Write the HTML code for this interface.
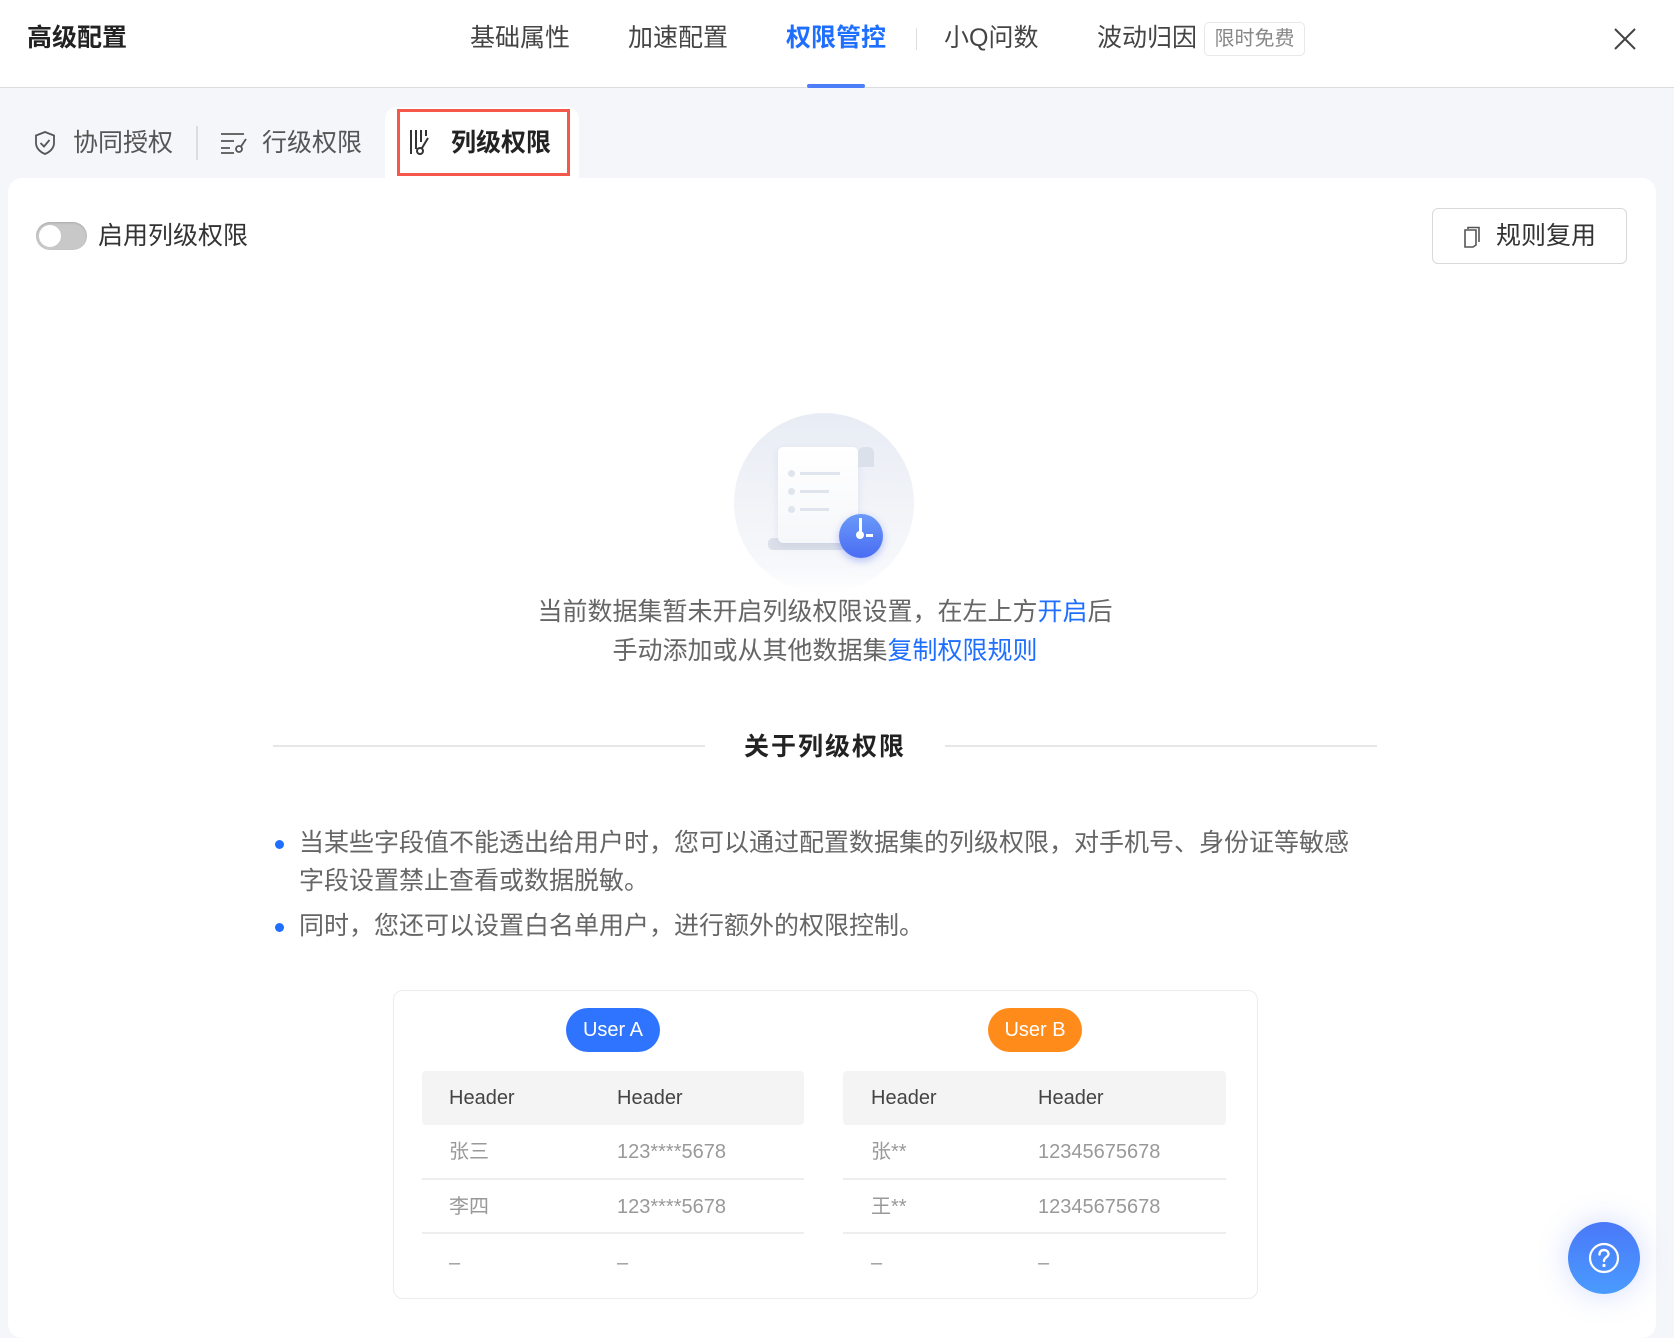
<!DOCTYPE html>
<html><head><meta charset="utf-8"><style>
*{margin:0;padding:0;box-sizing:border-box}
body{width:1674px;height:1314px;overflow:hidden;background:#f5f6fa;font-family:"Liberation Sans","Noto Sans CJK SC",sans-serif;position:relative;color:#333}
.a{position:absolute;white-space:nowrap}
.hdr{position:absolute;left:0;top:0;width:1674px;height:88px;background:#fff;border-bottom:1px solid #dcdde0}
.tab{position:absolute;top:20px;font-size:25px;line-height:36px;color:#444}
.sub{position:absolute;top:125px;font-size:25px;line-height:36px;color:#555}
.card{position:absolute;left:8px;top:178px;width:1648px;height:1160px;background:#fff;border-radius:14px}
.c{font-size:20px;line-height:28px;color:#999}
.h{font-size:20px;line-height:28px;color:#444}
</style></head><body>
<div class="hdr"></div>
<div class="a" style="left:27px;top:20px;font-size:25px;line-height:36px;font-weight:bold;color:#222">高级配置</div>
<div class="tab" style="left:470px">基础属性</div>
<div class="tab" style="left:628px">加速配置</div>
<div class="tab" style="left:786px;color:#1e6fff;font-weight:bold">权限管控</div>
<div class="a" style="left:916px;top:28px;width:1px;height:22px;background:#ddd"></div>
<div class="tab" style="left:944px">小Q问数</div>
<div class="tab" style="left:1097px">波动归因</div>
<div class="a" style="left:1204px;top:22px;width:101px;height:34px;border:1px solid #e8e8e8;border-radius:5px;font-size:20px;line-height:32px;text-align:center;color:#888">限时免费</div>
<svg class="a" style="left:1612px;top:26px" width="26" height="26" viewBox="0 0 26 26"><path d="M3 3L23 23M23 3L3 23" stroke="#444" stroke-width="2"/></svg>
<div class="a" style="left:807px;top:84px;width:58px;height:4px;background:#4d7ef7;border-radius:2px"></div>

<svg class="a" style="left:33px;top:130px" width="24" height="26" viewBox="0 0 24 26"><path d="M12 2L21 5.5V13C21 18 17 22 12 24C7 22 3 18 3 13V5.5Z" fill="none" stroke="#555" stroke-width="1.8"/><path d="M7.5 13L11 16.5L16.5 10" fill="none" stroke="#555" stroke-width="1.8"/></svg>
<div class="sub" style="left:73px">协同授权</div>
<div class="a" style="left:196px;top:126px;width:2px;height:34px;background:#ddd"></div>
<svg class="a" style="left:220px;top:131px" width="28" height="24" viewBox="0 0 28 24"><path d="M1 3H24M1 10H14M1 17H10M1 22H14" stroke="#555" stroke-width="1.8" fill="none"/><circle cx="19" cy="18" r="3" fill="none" stroke="#555" stroke-width="1.8"/><path d="M21 15.5L26 8" stroke="#555" stroke-width="1.8"/></svg>
<div class="sub" style="left:262px">行级权限</div>
<div class="a" style="left:385px;top:107px;width:194px;height:75px;background:#fff;border-radius:12px 12px 0 0"></div>
<div class="a" style="left:397px;top:109px;width:173px;height:67px;border:3px solid #f5574a"></div>
<svg class="a" style="left:409px;top:129px" width="26" height="28" viewBox="0 0 26 28"><path d="M2 1V25M7 1V20M12 1V13M17 1V7" stroke="#333" stroke-width="2" fill="none"/><circle cx="11" cy="22" r="3" fill="none" stroke="#333" stroke-width="2"/><path d="M13 19L19 9" stroke="#333" stroke-width="2"/></svg>
<div class="sub" style="left:451px;color:#222;font-weight:bold">列级权限</div>

<div class="card"></div>
<div class="a" style="left:36px;top:222px;width:51px;height:28px;border-radius:14px;background:#c8c8c8;box-shadow:inset 0 1px 2px rgba(0,0,0,.15)"></div>
<div class="a" style="left:39px;top:225px;width:22px;height:22px;border-radius:11px;background:#fff"></div>
<div class="a" style="left:98px;top:218px;font-size:25px;line-height:36px;color:#333">启用列级权限</div>
<div class="a" style="left:1432px;top:208px;width:195px;height:56px;border:1px solid #d9d9d9;border-radius:6px;background:#fff"></div>
<svg class="a" style="left:1463px;top:225px" width="20" height="24" viewBox="0 0 20 24"><path d="M5 4V2.5H16V17" fill="none" stroke="#555" stroke-width="1.6"/><path d="M2 5H13V20L10 22H2Z" fill="none" stroke="#555" stroke-width="1.6"/></svg>
<div class="a" style="left:1496px;top:218px;font-size:25px;line-height:36px;color:#333">规则复用</div>

<div class="a" style="left:734px;top:413px;width:180px;height:180px;border-radius:90px;background:linear-gradient(#e8ecf4,#f7f8fb 85%,#fff)"></div>
<div class="a" style="left:768px;top:538px;width:100px;height:12px;border-radius:5px;background:#dbe0ea"></div>
<div class="a" style="left:778px;top:447px;width:80px;height:96px;border-radius:5px;background:linear-gradient(#fff,#f6f7fa);box-shadow:0 3px 8px rgba(150,160,190,.2)"></div>
<div class="a" style="left:858px;top:447px;width:16px;height:20px;border-radius:6px 6px 0 0;background:#dbe0ea"></div>
<div class="a" style="left:788px;top:470px;width:7px;height:7px;border-radius:4px;background:#e0e4ec"></div>
<div class="a" style="left:800px;top:472px;width:40px;height:3px;background:#e0e4ec"></div>
<div class="a" style="left:788px;top:488px;width:7px;height:7px;border-radius:4px;background:#e0e4ec"></div>
<div class="a" style="left:800px;top:490px;width:29px;height:3px;background:#e0e4ec"></div>
<div class="a" style="left:788px;top:506px;width:7px;height:7px;border-radius:4px;background:#e0e4ec"></div>
<div class="a" style="left:800px;top:508px;width:29px;height:3px;background:#e0e4ec"></div>
<div class="a" style="left:839px;top:514px;width:44px;height:44px;border-radius:22px;background:linear-gradient(#6a9af8,#4a6cf3);box-shadow:0 3px 8px rgba(80,110,240,.4)"></div>
<div class="a" style="left:859px;top:518px;width:3px;height:14px;background:#fff"></div>
<div class="a" style="left:856px;top:531px;width:8px;height:8px;border-radius:4px;background:#fff"></div>
<div class="a" style="left:866px;top:534px;width:7px;height:3px;background:#fff"></div>

<div class="a" style="left:0;width:1650px;top:593px;text-align:center;font-size:25px;line-height:39px;color:#666">当前数据集暂未开启列级权限设置，在左上方<span style="color:#1e6fff">开启</span>后<br>手动添加或从其他数据集<span style="color:#1e6fff">复制权限规则</span></div>

<div class="a" style="left:273px;top:745px;width:432px;height:2px;background:#e6e6e6"></div>
<div class="a" style="left:945px;top:745px;width:432px;height:2px;background:#e6e6e6"></div>
<div class="a" style="left:705px;width:240px;top:729px;text-align:center;font-size:25px;line-height:36px;font-weight:bold;color:#222;letter-spacing:2px">关于列级权限</div>

<div class="a" style="left:275px;top:840px;width:9px;height:9px;border-radius:5px;background:#1e6fff"></div>
<div class="a" style="left:275px;top:923px;width:9px;height:9px;border-radius:5px;background:#1e6fff"></div>
<div class="a" style="left:299px;top:824px;font-size:25px;line-height:38px;color:#666">当某些字段值不能透出给用户时，您可以通过配置数据集的列级权限，对手机号、身份证等敏感<br>字段设置禁止查看或数据脱敏。</div>
<div class="a" style="left:299px;top:907px;font-size:25px;line-height:38px;color:#666">同时，您还可以设置白名单用户，进行额外的权限控制。</div>

<div class="a" style="left:393px;top:990px;width:865px;height:309px;border:1px solid #ececec;border-radius:10px;background:#fff"></div>
<div class="a" style="left:566px;top:1008px;width:94px;height:44px;border-radius:22px;background:#2f74ff;color:#fff;font-size:20px;line-height:44px;text-align:center">User A</div>
<div class="a" style="left:988px;top:1008px;width:94px;height:44px;border-radius:22px;background:#ff8c1a;color:#fff;font-size:20px;line-height:44px;text-align:center">User B</div>

<div class="a" style="left:422px;top:1071px;width:382px;height:54px;background:#f4f4f4;border-radius:4px"></div>
<div class="a" style="left:843px;top:1071px;width:383px;height:54px;background:#f4f4f4;border-radius:4px"></div>
<div class="a" style="left:422px;top:1178px;width:382px;height:2px;background:#eee"></div>
<div class="a" style="left:422px;top:1232px;width:382px;height:2px;background:#eee"></div>
<div class="a" style="left:843px;top:1178px;width:383px;height:2px;background:#eee"></div>
<div class="a" style="left:843px;top:1232px;width:383px;height:2px;background:#eee"></div>

<div class="a h" style="left:449px;top:1084px">Header</div>
<div class="a h" style="left:617px;top:1084px">Header</div>
<div class="a h" style="left:871px;top:1084px">Header</div>
<div class="a h" style="left:1038px;top:1084px">Header</div>

<div class="a c" style="left:449px;top:1138px">张三</div>
<div class="a c" style="left:617px;top:1138px">123****5678</div>
<div class="a c" style="left:871px;top:1138px">张**</div>
<div class="a c" style="left:1038px;top:1138px">12345675678</div>
<div class="a c" style="left:449px;top:1193px">李四</div>
<div class="a c" style="left:617px;top:1193px">123****5678</div>
<div class="a c" style="left:871px;top:1193px">王**</div>
<div class="a c" style="left:1038px;top:1193px">12345675678</div>
<div class="a c" style="left:449px;top:1249px">–</div>
<div class="a c" style="left:617px;top:1249px">–</div>
<div class="a c" style="left:871px;top:1249px">–</div>
<div class="a c" style="left:1038px;top:1249px">–</div>

<div class="a" style="left:1568px;top:1222px;width:72px;height:72px;border-radius:36px;background:linear-gradient(#4a78f8,#4a9bff);box-shadow:0 0 30px rgba(80,120,250,.25)"></div>
<svg class="a" style="left:1588px;top:1242px" width="32" height="32" viewBox="0 0 32 32"><circle cx="16" cy="16" r="14" fill="none" stroke="#fff" stroke-width="2.2"/><path d="M11.5 12.5C11.5 9.5 13.5 8 16 8C18.5 8 20.5 9.7 20.5 12C20.5 15 16 15.5 16 19" fill="none" stroke="#fff" stroke-width="2.4" stroke-linecap="round"/><circle cx="16" cy="23.5" r="1.6" fill="#fff"/></svg>
</body></html>
